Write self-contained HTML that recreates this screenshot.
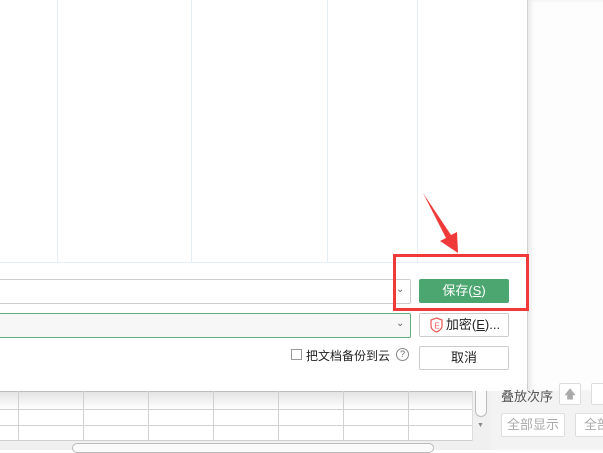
<!DOCTYPE html>
<html><head><meta charset="utf-8"><style>
*{margin:0;padding:0;box-sizing:border-box}
body{width:603px;height:450px;overflow:hidden;background:#fff;position:relative;font-family:"Liberation Sans","Noto Sans CJK SC",sans-serif;font-size:12px;color:#222}
.a{position:absolute}
.vl{position:absolute;top:0;height:262px;width:1px;background:#e6eef8}
.btn{position:absolute;left:419px;width:90px;height:24px;border:1px solid #ccc;border-radius:2px;background:#fff;text-align:center;line-height:22px;font-size:13px}
.gl{position:absolute;width:1px;background:#d0d0d0;top:391px;height:49px}
.hl{position:absolute;left:0;width:472px;height:1px;background:#d0d0d0}
</style></head><body>
<div class="a" style="left:527px;top:0;width:76px;height:392px;background:#fdfdfd;border-left:1px solid #d0d0d0;box-shadow:inset 3px 0 4px rgba(0,0,0,0.08)"></div>
<div class="vl" style="left:57px"></div><div class="vl" style="left:191px"></div><div class="vl" style="left:327px"></div><div class="vl" style="left:417px"></div>
<div class="a" style="left:0;top:262px;width:519px;height:1px;background:#e6eef8"></div>
<div class="a" style="left:0;top:279px;width:411px;height:25px;border:1px solid #ccc;border-left:none;border-radius:0 2px 2px 0"></div>
<div class="a" style="left:396px;top:284px;font-size:10px;color:#666">⌄</div>
<div class="a" style="left:0;top:313px;width:411px;height:25px;border:1px solid #5fb07c;border-left:none;background:#f7f7f7;border-radius:0 2px 2px 0"></div>
<div class="a" style="left:396px;top:318px;font-size:10px;color:#666">⌄</div>
<div class="btn" style="top:279px;background:#4ba66f;border-color:#4ba66f;color:#fff">保存(<u>S</u>)</div>
<div class="btn" style="top:313px;padding-left:18px">加密(<u>E</u>)...</div>
<svg class="a" style="left:430px;top:317px" width="13" height="16" viewBox="0 0 13 16"><path d="M6.5 1 L12 3 V9 C12 12 9 14 6.5 15 C4 14 1 12 1 9 V3 Z" fill="none" stroke="#e55" stroke-width="1.2"/><text x="4.2" y="11.5" font-size="8" fill="#e55" font-family="Liberation Sans">E</text></svg>
<div class="btn" style="top:346px">取消</div>
<div class="a" style="left:291px;top:349px;width:11px;height:11px;border:1px solid #999"></div>
<div class="a" style="left:306px;top:347px;font-size:12px">把文档备份到云</div>
<div class="a" style="left:396px;top:348px;width:13px;height:13px;border:1px solid #888;border-radius:50%;font-size:9px;line-height:11px;text-align:center;color:#666">?</div>
<div class="a" style="left:393px;top:254px;width:136px;height:57px;border:3px solid #f03a3a"></div>
<svg class="a" style="left:0;top:0" width="603" height="450"><polygon points="423,193 446,238 440,241 458,253 457,232 451,235" fill="#f03a3a"/></svg>
<div class="a" style="left:0;top:391px;width:472px;height:50px;background:#fff"></div>
<div class="a" style="left:0;top:391px;width:472px;height:18px;background:linear-gradient(#e2e2e2,#fff)"></div>
<div class="hl" style="top:391px;background:#bbb"></div><div class="hl" style="top:409px"></div><div class="hl" style="top:425px"></div>
<div class="gl" style="left:18px"></div><div class="gl" style="left:83px"></div><div class="gl" style="left:148px"></div><div class="gl" style="left:213px"></div><div class="gl" style="left:278px"></div><div class="gl" style="left:343px"></div><div class="gl" style="left:408px"></div>
<div class="a" style="left:0;top:440px;width:490px;height:10px;background:#f0f0f0;border-top:1px solid #d0d0d0"></div>
<div class="a" style="left:72px;top:443px;width:362px;height:10px;border:1px solid #bbb;border-radius:5px;background:#fafafa"></div>
<div class="a" style="left:472px;top:391px;width:18px;height:50px;background:#f0f0f0;border-left:1px solid #ddd"></div>
<div class="a" style="left:475px;top:391px;width:12px;height:26px;border:1px solid #bbb;border-top:none;border-radius:0 0 6px 6px;background:#fafafa"></div>
<div class="a" style="left:477px;top:422px;font-size:7px;color:#888">▼</div>
<div class="a" style="left:490px;top:391px;width:113px;height:59px;background:#f3f3f3"></div>
<div class="a" style="left:501px;top:386px;font-size:13px;color:#555">叠放次序</div>
<div class="a" style="left:559px;top:383px;width:22px;height:22px;border:1px solid #ddd;background:#fff;border-radius:2px;text-align:center;color:#aaa;line-height:20px">🡅</div>
<div class="a" style="left:591px;top:383px;width:22px;height:22px;border:1px solid #ddd;background:#fff;border-radius:2px"></div>
<div class="a" style="left:501px;top:413px;width:64px;height:24px;border:1px solid #ddd;background:#fff;border-radius:2px;color:#aaa;text-align:center;line-height:22px;font-size:13px">全部显示</div>
<div class="a" style="left:575px;top:413px;width:64px;height:24px;border:1px solid #ddd;background:#fff;border-radius:2px;color:#aaa;line-height:22px;padding-left:8px;font-size:13px">全部</div>
</body></html>
